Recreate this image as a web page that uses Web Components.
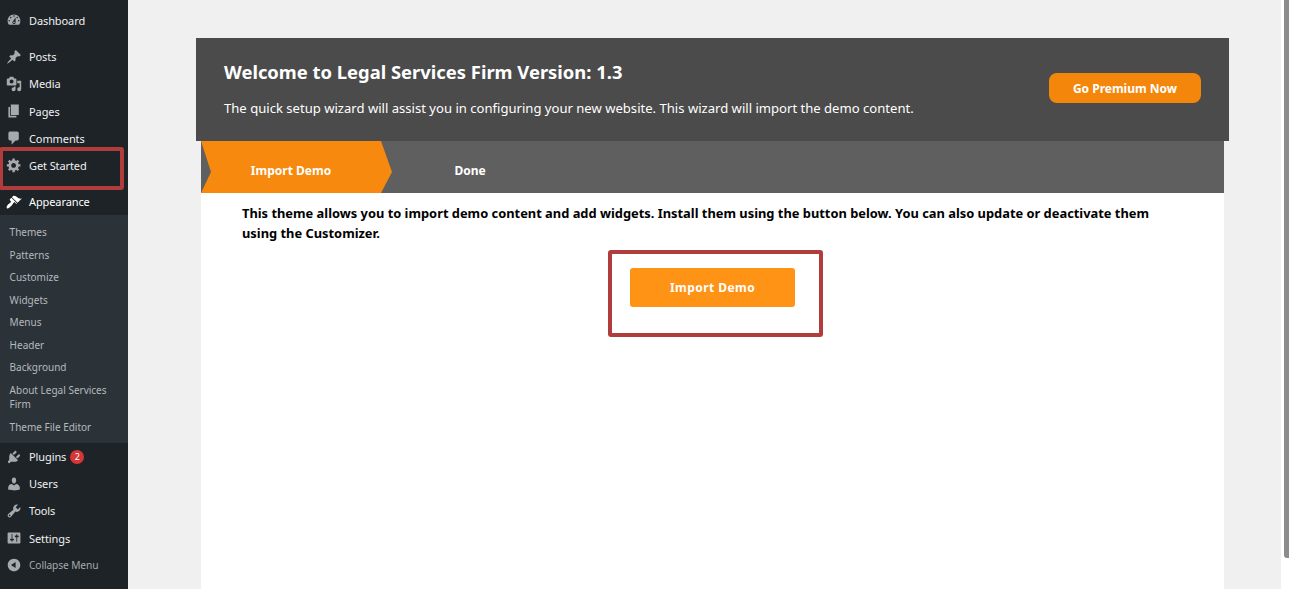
<!DOCTYPE html>
<html>
<head>
<meta charset="utf-8">
<title>Legal Services Firm setup</title>
<style>
  html, body { margin: 0; height: 100%; overflow: hidden; }
  body { background: #f0f0f0; font-family: "Noto Sans", "Open Sans", sans-serif; }
  #page { display: flex; height: 589px; }
</style>
</head>
<body>
<div id="page">
  <wp-menu>
    <menu-item icon="dashboard">Dashboard</menu-item>
    <menu-sep></menu-sep>
    <menu-item icon="post">Posts</menu-item>
    <menu-item icon="media">Media</menu-item>
    <menu-item icon="page">Pages</menu-item>
    <menu-item icon="comment">Comments</menu-item>
    <menu-item icon="gear" marked>Get Started</menu-item>
    <menu-sep></menu-sep>
    <menu-item icon="brush" current>Appearance</menu-item>
    <sub-menu>
      <sub-item>Themes</sub-item>
      <sub-item>Patterns</sub-item>
      <sub-item>Customize</sub-item>
      <sub-item>Widgets</sub-item>
      <sub-item>Menus</sub-item>
      <sub-item>Header</sub-item>
      <sub-item>Background</sub-item>
      <sub-item>About Legal Services Firm</sub-item>
      <sub-item>Theme File Editor</sub-item>
    </sub-menu>
    <menu-item icon="plugin" badge="2">Plugins</menu-item>
    <menu-item icon="users">Users</menu-item>
    <menu-item icon="tools">Tools</menu-item>
    <menu-item icon="settings">Settings</menu-item>
    <menu-item icon="collapse" dim>Collapse Menu</menu-item>
  </wp-menu>
  <setup-wizard>
    <wizard-head slot="head"></wizard-head>
    <wizard-steps slot="steps"></wizard-steps>
    <import-panel></import-panel>
  </setup-wizard>
  <fake-scrollbar></fake-scrollbar>
</div>

<script>
const ICONS = {
  dashboard: 'M3.76 16h12.48c1.1-1.37 1.76-3.11 1.76-5 0-4.42-3.58-8-8-8s-8 3.58-8 8c0 1.89.66 3.63 1.76 5zM10 4c.55 0 1 .45 1 1s-.45 1-1 1-1-.45-1-1 .45-1 1-1zM6 6c.55 0 1 .45 1 1s-.45 1-1 1-1-.45-1-1 .45-1 1-1zm8 0c.55 0 1 .45 1 1s-.45 1-1 1-1-.45-1-1 .45-1 1-1zm-5.37 5.55L12 7v6c0 1.1-.9 2-2 2s-2-.9-2-2c0-.57.24-1.08.63-1.45zM4 10c.55 0 1 .45 1 1s-.45 1-1 1-1-.45-1-1 .45-1 1-1zm12 0c.55 0 1 .45 1 1s-.45 1-1 1-1-.45-1-1 .45-1 1-1zm-5 3c0-.55-.45-1-1-1s-1 .45-1 1 .45 1 1 1 1-.45 1-1z',
  post: 'M10.44 3.02l1.82-1.82 6.36 6.35-1.83 1.82c-1.05-.68-2.48-.57-3.41.36l-.75.75c-.92.93-1.04 2.35-.35 3.41l-1.83 1.82-2.41-2.41-2.8 2.79c-.42.42-3.38 2.71-3.8 2.29s1.86-3.39 2.28-3.81l2.79-2.79L4.1 9.36l1.83-1.82c1.05.69 2.48.57 3.4-.36l.75-.75c.93-.92 1.05-2.35.36-3.41z',
  media: 'M13 11V4c0-.55-.45-1-1-1h-1.67L9 1H5L3.67 3H2c-.55 0-1 .45-1 1v7c0 .55.45 1 1 1h10c.55 0 1-.45 1-1zM7 4.5c1.38 0 2.5 1.12 2.5 2.5S8.38 9.5 7 9.5 4.5 8.38 4.5 7 5.62 4.5 7 4.5zM14 6h5v10.5c0 1.38-1.12 2.5-2.5 2.5S14 17.88 14 16.5s1.12-2.5 2.5-2.5c.17 0 .34.02.5.05V9h-3V6zm-4 8.05V13h2v3.5c0 1.38-1.12 2.5-2.5 2.5S7 17.88 7 16.5 8.12 14 9.5 14c.17 0 .34.02.5.05z',
  page: 'M6 15V2h10v13H6zm-1 1h8v2H3V5h2v11z',
  comment: 'M5 2h9c1.1 0 2 .9 2 2v7c0 1.1-.9 2-2 2h-2l-5 5v-5H5c-1.1 0-2-.9-2-2V4c0-1.1.9-2 2-2z',
  gear: 'M18 12h-2.18c-.17.7-.44 1.35-.81 1.93l1.54 1.54-2.1 2.1-1.54-1.54c-.58.36-1.23.63-1.91.79V19H8v-2.18c-.68-.16-1.33-.43-1.91-.79l-1.54 1.54-2.12-2.12 1.54-1.54c-.36-.58-.63-1.23-.79-1.91H1V9.03h2.17c.16-.7.44-1.35.8-1.94L2.43 5.55l2.1-2.1 1.54 1.54c.58-.37 1.24-.64 1.93-.81V2h3v2.18c.68.16 1.33.43 1.91.79l1.54-1.54 2.12 2.12-1.54 1.54c.36.59.64 1.24.8 1.94H18V12zm-8.5 1.5c1.66 0 3-1.34 3-3s-1.34-3-3-3-3 1.34-3 3 1.34 3 3 3z',
  brush: 'M14.48 11.06L7.41 3.99l1.5-1.5c.5-.56 2.3-.47 3.51.32 1.21.8 1.43 1.28 2.91 2.1 1.18.64 2.45 1.26 4.45.85zm-.71.71L6.7 4.7 4.93 6.47c-.39.39-.39 1.02 0 1.41l1.06 1.06c.39.39.39 1.03 0 1.42-.6.6-1.43 1.11-2.21 1.69-.35.26-.7.53-1.01.84C1.43 14.23.05 16.9 1.2 18.05 2.35 19.2 6.01 15.28 7.35 13.94c.31-.31.58-.66.85-1.02.57-.78 1.08-1.61 1.69-2.21.39-.39 1.02-.39 1.41 0l1.06 1.06c.39.39 1.02.39 1.41 0z',
  plugin: 'M13.11 4.36L9.87 7.6 8 5.73l3.24-3.24c.35-.34 1.05-.2 1.56.32.52.51.66 1.21.31 1.55zm-8 1.77l.91-1.12 9.01 9.01-1.19.84c-.71.71-2.63 1.16-3.82 1.16H6.14L4.9 17.26c-.59.59-1.54.59-2.12 0-.59-.58-.59-1.53 0-2.12l1.24-1.24v-3.88c0-1.13.4-3.19 1.09-3.89zm7.26 3.97l3.24-3.24c.34-.35 1.04-.21 1.55.31.52.51.66 1.21.31 1.55l-3.24 3.25z',
  users: 'M10 9.25c-2.27 0-2.73-3.44-2.73-3.44C7 4.02 7.82 2 9.97 2c2.16 0 2.98 2.02 2.71 3.81 0 0-.41 3.44-2.68 3.44zm0 2.57L12.72 10c2.39 0 4.52 2.33 4.52 4.53v2.49s-3.65 1.13-7.24 1.13c-3.65 0-7.24-1.13-7.24-1.13v-2.49c0-2.25 1.94-4.48 4.47-4.48z',
  tools: 'M16.68 9.77c-1.34 1.34-3.3 1.67-4.95.99l-5.41 6.52c-.99.99-2.59.99-3.58 0s-.99-2.59 0-3.57l6.52-5.42c-.68-1.65-.35-3.61.99-4.95 1.28-1.28 3.12-1.62 4.72-1.06l-2.89 2.89 2.82 2.82 2.86-2.87c.53 1.58.18 3.39-1.08 4.65zM3.81 16.21c.4.39 1.04.39 1.43 0 .4-.4.4-1.04 0-1.43-.39-.4-1.03-.4-1.43 0-.39.39-.39 1.03 0 1.43z',
  settings: 'M18 16V4c0-.55-.45-1-1-1H3c-.55 0-1 .45-1 1v12c0 .55.45 1 1 1h14c.55 0 1-.45 1-1zM8 11h1c.55 0 1 .45 1 1s-.45 1-1 1H8v1.5c0 .28-.22.5-.5.5s-.5-.22-.5-.5V13H6c-.55 0-1-.45-1-1s.45-1 1-1h1V5.5c0-.28.22-.5.5-.5s.5.22.5.5V11zm5-2h-1c-.55 0-1-.45-1-1s.45-1 1-1h1V5.5c0-.28.22-.5.5-.5s.5.22.5.5V7h1c.55 0 1 .45 1 1s-.45 1-1 1h-1v5.5c0 .28-.22.5-.5.5s-.5-.22-.5-.5V9z',
  collapse: 'M10 2.16c4.33 0 7.84 3.51 7.84 7.84s-3.51 7.84-7.84 7.84S2.16 14.33 2.16 10 5.71 2.16 10 2.16zm2 11.72V6.12L6.18 9.97z'
};

class WpMenu extends HTMLElement {
  constructor() {
    super();
    this.attachShadow({ mode: 'open' });
    this.shadowRoot.innerHTML = `
      <style>
        :host {
          display: block;
          flex: 0 0 128px;
          box-sizing: border-box;
          padding-top: 6.85px;
          background: #1d2327;
        }
      </style>
      <slot></slot>
    `;
  }
}
customElements.define('wp-menu', WpMenu);

class MenuSep extends HTMLElement {
  constructor() {
    super();
    this.attachShadow({ mode: 'open' });
    this.shadowRoot.innerHTML = `<style>:host { display: block; height: 9px; }</style>`;
  }
}
customElements.define('menu-sep', MenuSep);

class MenuItem extends HTMLElement {
  constructor() {
    super();
    this.attachShadow({ mode: 'open' });
    const badge = this.getAttribute('badge');
    this.shadowRoot.innerHTML = `
      <style>
        :host {
          display: flex;
          align-items: center;
          position: relative;
          height: 27.2px;
          padding-left: 6px;
          color: #f0f0f1;
          font-size: 11px;
          letter-spacing: -0.1px;
        }
        :host([dim]) { color: #a7aaad; font-size: 10.2px; }
        :host([current]) { color: #fff; }
        :host([current]) svg { fill: #fff; }
        svg {
          width: 16px;
          height: 16px;
          fill: #a7aaad;
          flex-shrink: 0;
          margin-right: 7px;
        }
        .badge {
          display: inline-block;
          min-width: 14px;
          height: 14px;
          line-height: 14px;
          margin-left: 4px;
          border-radius: 50%;
          background: #d63638;
          color: #fff;
          font-size: 9px;
          text-align: center;
        }
        .mark {
          position: absolute;
          left: -1px;
          top: -5px;
          width: 117px;
          height: 35px;
          border: 4px solid #b03c3c;
          border-radius: 3px;
        }
      </style>
      <svg viewBox="0 0 20 20"><path d="${ICONS[this.getAttribute('icon')]}"></path></svg>
      <span><slot></slot></span>
      ${badge ? `<span class="badge">${badge}</span>` : ''}
      ${this.hasAttribute('marked') ? '<span class="mark"></span>' : ''}
    `;
  }
}
customElements.define('menu-item', MenuItem);

class SubMenu extends HTMLElement {
  constructor() {
    super();
    this.attachShadow({ mode: 'open' });
    this.shadowRoot.innerHTML = `
      <style>
        :host {
          display: block;
          box-sizing: border-box;
          height: 227.8px;
          padding-top: 5.6px;
          background: #2c3338;
        }
      </style>
      <slot></slot>
    `;
  }
}
customElements.define('sub-menu', SubMenu);

class SubItem extends HTMLElement {
  constructor() {
    super();
    this.attachShadow({ mode: 'open' });
    this.shadowRoot.innerHTML = `
      <style>
        :host {
          display: block;
          padding: 4.2px 8px 4.2px 9.6px;
          color: #b4b9be;
          font-size: 10px;
          line-height: 14.2px;
        }
      </style>
      <slot></slot>
    `;
  }
}
customElements.define('sub-item', SubItem);

class SetupWizard extends HTMLElement {
  constructor() {
    super();
    this.attachShadow({ mode: 'open' });
    this.shadowRoot.innerHTML = `
      <style>
        :host {
          display: block;
          flex: 1;
          min-width: 0;
          padding: 38px 52px 0 68px;
        }
        .inset {
          margin: 0 5px;
          display: flex;
          flex-direction: column;
          height: 448px;
          background: #fff;
        }
      </style>
      <slot name="head"></slot>
      <div class="inset">
        <slot name="steps"></slot>
        <slot></slot>
      </div>
    `;
  }
}
customElements.define('setup-wizard', SetupWizard);

class WizardHead extends HTMLElement {
  constructor() {
    super();
    this.attachShadow({ mode: 'open' });
    this.shadowRoot.innerHTML = `
      <style>
        :host {
          display: flex;
          align-items: center;
          justify-content: space-between;
          height: 103px;
          padding: 0 28px;
          background: #4b4b4b;
          color: #fff;
        }
        h1 {
          margin: -1px 0 14px;
          font-size: 18.4px;
          line-height: 24px;
          font-weight: 700;
        }
        p { margin: 0; font-size: 13.08px; line-height: 20px; }
        a {
          display: block;
          width: 152px;
          height: 30px;
          margin-bottom: 4px;
          line-height: 32px;
          border-radius: 8px;
          background: #f5860c;
          color: #fff;
          font-size: 12px;
          font-weight: 700;
          text-align: center;
        }
      </style>
      <div>
        <h1>Welcome to Legal Services Firm Version: 1.3</h1>
        <p>The quick setup wizard will assist you in configuring your new website. This wizard will import the demo content.</p>
      </div>
      <a>Go Premium Now</a>
    `;
  }
}
customElements.define('wizard-head', WizardHead);

class WizardSteps extends HTMLElement {
  constructor() {
    super();
    this.attachShadow({ mode: 'open' });
    this.shadowRoot.innerHTML = `
      <style>
        :host {
          display: flex;
          height: 52px;
          background: #5f5f5f;
          color: #fff;
          font-size: 12px;
          font-weight: 700;
        }
        .step { display: flex; align-items: center; justify-content: center; padding-top: 7px; box-sizing: border-box; }
        .on {
          width: 191px;
          padding-right: 11px;
          background: #f7890e;
          clip-path: polygon(0 0, 180px 0, 191px 31px, 180px 52px, 0 52px, 10px 31px);
        }
        .done { width: 157px; padding-right: 1px; }
      </style>
      <div class="step on">Import Demo</div>
      <div class="step done">Done</div>
    `;
  }
}
customElements.define('wizard-steps', WizardSteps);

class ImportPanel extends HTMLElement {
  constructor() {
    super();
    this.attachShadow({ mode: 'open' });
    this.shadowRoot.innerHTML = `
      <style>
        :host {
          display: block;
          padding: 10px 41px 0;
          color: #000;
        }
        p {
          margin: 0 0 7px;
          font-size: 12.87px;
          line-height: 20px;
          font-weight: 700;
        }
        .frame {
          box-sizing: border-box;
          width: 215px;
          height: 87px;
          margin-left: 366px;
          padding: 14px 18px;
          border: 4px solid #b03c3c;
          border-radius: 3px;
        }
        a {
          display: block;
          width: 165px;
          height: 39px;
          line-height: 39px;
          border-radius: 3px;
          background: #ff9315;
          color: #fff;
          font-size: 12px;
          letter-spacing: .45px;
          font-weight: 700;
          text-align: center;
        }
      </style>
      <p>This theme allows you to import demo content and add widgets. Install them using the button below. You can also update or deactivate them using the Customizer.</p>
      <div class="frame"><a>Import Demo</a></div>
    `;
  }
}
customElements.define('import-panel', ImportPanel);

class FakeScrollbar extends HTMLElement {
  constructor() {
    super();
    this.attachShadow({ mode: 'open' });
    this.shadowRoot.innerHTML = `
      <style>
        :host {
          display: block;
          flex: 0 0 8px;
          box-sizing: border-box;
          padding-left: 3px;
          background: #fff;
        }
        div { height: 558px; background: #8c8c8c; border-bottom-left-radius: 3px; }
      </style>
      <div></div>
    `;
  }
}
customElements.define('fake-scrollbar', FakeScrollbar);
</script>
</body>
</html>
